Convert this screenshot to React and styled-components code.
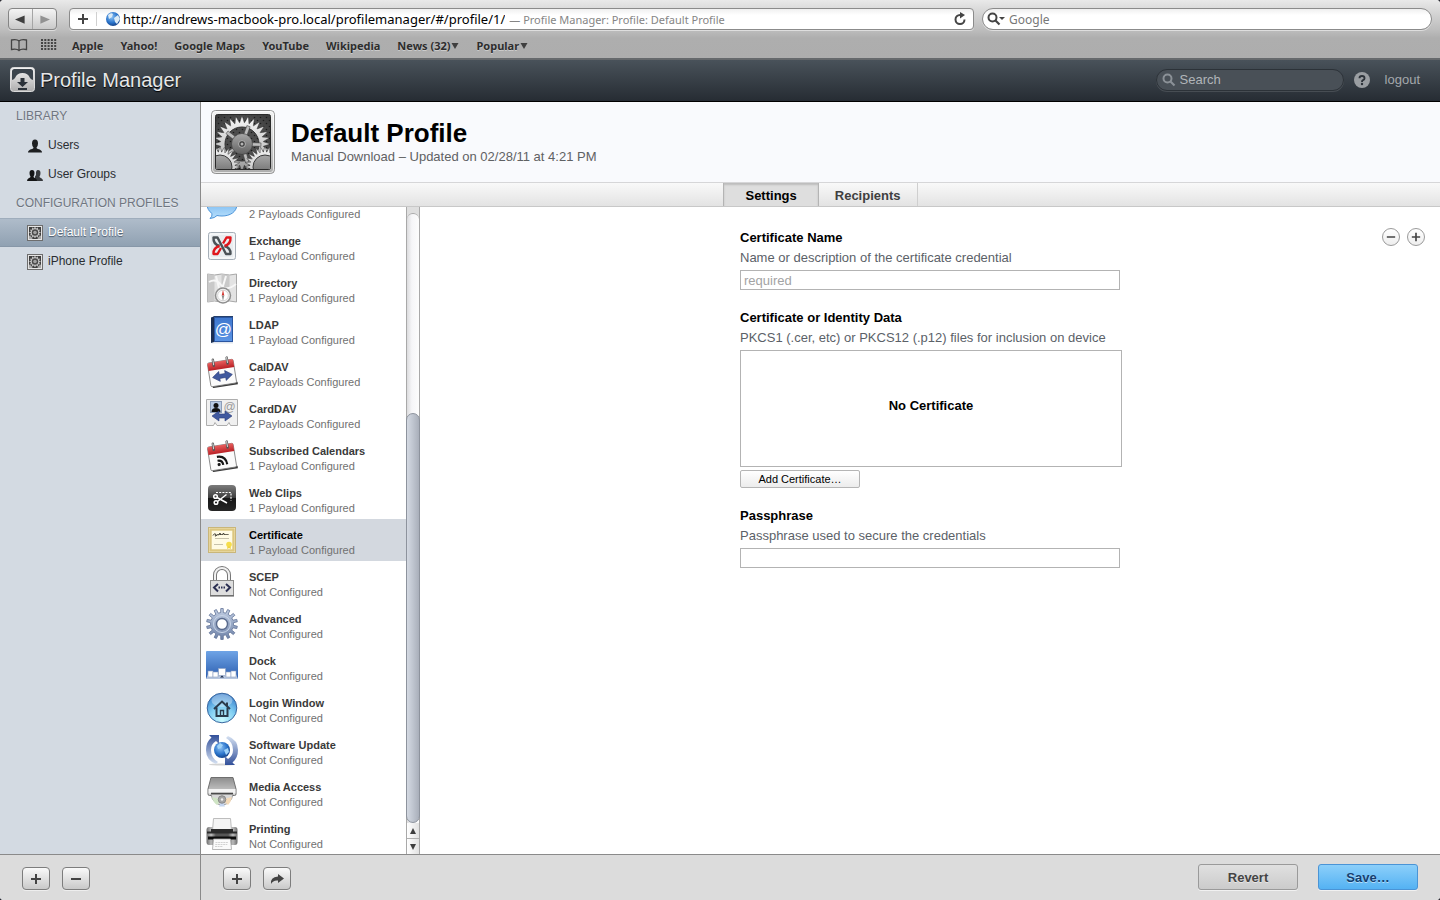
import React, { useState } from "react";
import styled, { createGlobalStyle, css } from "styled-components";

const helvetica = `"Liberation Sans", Helvetica, Arial, sans-serif`;
const lucida = `"Noto Sans", "Lucida Grande", sans-serif`;
const lineColor = "#8a8a8a";

const GlobalStyle = createGlobalStyle`
  * {
    box-sizing: border-box;
  }
  body {
    margin: 0;
    background: #2b2b33;
    font-family: ${helvetica};
    font-size: 13px;
  }
  button, input {
    font-family: inherit;
    font-size: inherit;
    margin: 0;
  }
  button {
    cursor: pointer;
  }
  svg {
    display: block;
    flex: none;
  }
`;

const Window = styled.div`
  display: flex;
  flex-direction: column;
  height: 100vh;
  border-radius: 4px;
  overflow: hidden;
  background: white;
`;

/* ---------- browser ---------- */

const BrowserChrome = styled.header`
  flex: none;
  font-family: ${lucida};
  background: linear-gradient(#e9e9e9 0, #d6d6d6 12px, #bdbdbd 30px, #aeaeae 38px, #adadad 100%);
  border-bottom: 2px solid #66696c;
`;

const Toolbar = styled.div`
  display: flex;
  padding: 8px 8px 0;
`;

const NavButtons = styled.div`
  display: flex;
  width: 49px;
  height: 22px;
  margin-right: 12px;
  border: 1px solid #858585;
  border-radius: 4px;
  background: linear-gradient(#f4f4f4, #c9c9c9);
  box-shadow: 0 1px rgba(255, 255, 255, 0.5);
`;

const NavButton = styled.button`
  flex: 1;
  display: flex;
  align-items: center;
  justify-content: center;
  padding: 0;
  border: none;
  background: none;

  & + & {
    border-left: 1px solid #a5a5a5;
  }
`;

const AddressBar = styled.div`
  flex: 1;
  display: flex;
  align-items: center;
  min-width: 0;
  height: 22px;
  margin-right: 8px;
  border: 1px solid #8b8b8b;
  border-radius: 4px;
  background: linear-gradient(#f0f0f0, white 6px);
  box-shadow: 0 1px rgba(255, 255, 255, 0.5);
`;

const AddressButton = styled.button`
  display: flex;
  align-items: center;
  justify-content: center;
  width: 27px;
  height: 14px;
  padding: 0;
  border: none;
  border-right: ${props => (props.$divided ? "1px solid #d0d0d0" : "none")};
  background: none;
`;

const UrlInput = styled.input`
  field-sizing: content;
  margin-left: 2px;
  padding: 0;
  border: none;
  outline: none;
  background: none;
  color: black;
`;

const PageTitle = styled.span`
  flex: 1;
  margin-left: 4px;
  font-size: 11px;
  color: #858585;
  white-space: nowrap;
  overflow: hidden;
`;

const GoogleBox = styled.label`
  flex: 0 1 450px;
  display: flex;
  align-items: center;
  height: 22px;
  padding: 0 4px;
  border: 1px solid #8b8b8b;
  border-radius: 11px;
  background: linear-gradient(#efefef, white 6px);
  box-shadow: 0 1px rgba(255, 255, 255, 0.5);
  font-size: 12px;
`;

const PlainInput = styled.input`
  flex: 1;
  min-width: 0;
  padding: 0 4px;
  border: none;
  outline: none;
  background: none;
  color: ${props => props.$color};

  &::placeholder {
    color: ${props => props.$color};
    opacity: 1;
  }
`;

const Bookmarks = styled.nav`
  display: flex;
  align-items: center;
  gap: 17px;
  height: 28px;
  padding: 2px 10px 0;
  font-size: 11px;
  font-weight: 700;
`;

const BookmarkIcons = styled.div`
  display: flex;
  gap: 13px;
  margin-right: -2px;
`;

const Bookmark = styled.a`
  display: flex;
  align-items: center;
  gap: 1px;
  color: #2d2d2d;
  text-decoration: none;
  white-space: nowrap;
  text-shadow: 0 1px rgba(255, 255, 255, 0.4);
`;

/* ---------- application bar ---------- */

const AppBar = styled.header`
  flex: none;
  display: flex;
  align-items: center;
  height: 42px;
  padding: 0 20px 2px 10px;
  background: linear-gradient(#49525a, #262c33);
  border-bottom: 1px solid black;
`;

const AppTitle = styled.h1`
  flex: 1;
  margin: 0 0 0 5px;
  font-size: 20px;
  font-weight: 400;
  line-height: 24px;
  color: #e6e7e8;
  text-shadow: 0 1px 1px black;
`;

const AppSearch = styled.label`
  display: flex;
  align-items: center;
  width: 188px;
  height: 22px;
  padding: 0 5px;
  border: 1px solid #2c3238;
  border-radius: 11px;
  background: #495057;
  box-shadow: 0 1px rgba(255, 255, 255, 0.12);
`;

const HelpButton = styled.button`
  display: flex;
  margin: 0 15px 0 10px;
  padding: 0;
  border: none;
  background: none;
`;

const Logout = styled.a`
  color: #a4a8ac;
  text-decoration: none;
`;

/* ---------- sidebar ---------- */

const Columns = styled.div`
  flex: 1;
  display: flex;
  min-height: 0;
`;

const Sidebar = styled.aside`
  flex: none;
  display: flex;
  flex-direction: column;
  width: 201px;
  border-right: 1px solid ${lineColor};
  background: #d3dae2;
`;

const SidebarBody = styled.nav`
  flex: 1;
  font-size: 12px;
  line-height: 29px;
`;

const SidebarHeading = styled.h2`
  margin: 0;
  padding-left: 16px;
  height: 29px;
  font-size: 12px;
  line-height: 28px;
  font-weight: 400;
  color: #6f7680;
  text-shadow: 0 1px rgba(255, 255, 255, 0.4);
`;

const SidebarItem = styled.a`
  display: flex;
  align-items: center;
  gap: 5px;
  height: 29px;
  padding-left: 27px;
  color: #2a2d31;
  text-decoration: none;

  ${props =>
    props.$selected &&
    css`
      color: white;
      background: linear-gradient(#b0bdcb, #8fa0b1);
      box-shadow: inset 0 1px #9fadbc, inset 0 -1px #8797a8;
      text-shadow: 0 1px 1px rgba(50, 65, 85, 0.8);
    `}
`;

/* ---------- profile ---------- */

const Main = styled.main`
  flex: 1;
  display: flex;
  flex-direction: column;
  min-width: 0;
`;

const ProfileHeader = styled.div`
  flex: none;
  display: flex;
  align-items: center;
  gap: 16px;
  height: 80px;
  padding: 0 10px;
  background: #f9fafd;
`;

const ProfileHeading = styled.div`
  padding-top: 2px;
`;

const ProfileTitle = styled.h2`
  margin: 0;
  font-size: 26px;
  line-height: 28px;
  color: black;
`;

const ProfileMeta = styled.p`
  margin: 0;
  line-height: 20px;
  color: #5f6163;
`;

const TabBar = styled.div`
  flex: none;
  display: flex;
  justify-content: center;
  height: 25px;
  border-top: 1px solid #d6d6d8;
  border-bottom: 1px solid #c8c8c8;
  background: linear-gradient(#f9f9f9, #e3e3e3);
`;

const Tab = styled.button`
  padding: 2px 16px 0;
  border: none;
  border-right: 1px solid #cfcfcf;
  background: none;
  font-weight: 700;
  color: #3f3f3f;

  ${props =>
    props.$selected &&
    css`
      padding: 2px 21px 0;
      border-left: 1px solid #b4b4b4;
      border-right-color: #b4b4b4;
      background: #dedede;
      box-shadow: inset 0 2px 2px rgba(0, 0, 0, 0.15);
      color: black;
    `}
`;

const Workspace = styled.div`
  flex: 1;
  display: flex;
  min-height: 0;
`;

const PayloadPane = styled.div`
  flex: none;
  display: flex;
  width: 219px;
  overflow: hidden;
`;

const PayloadList = styled.ul`
  flex: 1;
  margin: -24px 0 0;
  padding: 0;
  list-style: none;
`;

const PayloadRow = styled.li`
  display: flex;
  align-items: center;
  gap: 11px;
  height: 42px;
  padding-left: 5px;
  background: ${props => (props.$selected ? "#d3d8df" : "white")};
  cursor: pointer;
`;

const PayloadText = styled.div`
  padding-top: 6px;
  font-size: 11px;
  line-height: 15px;
  color: #717171;
`;

const PayloadName = styled.div`
  font-weight: 700;
  color: ${props => (props.$selected ? "black" : "#3a3a3a")};
`;

const ScrollBar = styled.div`
  display: flex;
  flex-direction: column;
  width: 14px;
  border-left: 1px solid #a9a9a9;
  border-right: 1px solid #a9a9a9;
  background: #dfdfdf;
`;

const ScrollTrack = styled.div`
  flex: 1;
  display: flex;
  flex-direction: column;
  margin-top: 6px;
  border-top: 1px solid #a9a9a9;
  border-radius: 6px 6px 0 0;
  background: linear-gradient(90deg, #dcdcde, #f6f6f8 40%, #fdfdfd);
`;

const ScrollSpace = styled.div`
  flex: 20;
`;

const ScrollThumb = styled.div`
  flex: 41;
  margin: 0 -1px;
  border: 1px solid #8d939d;
  border-radius: 7px;
  background: linear-gradient(90deg, #d4d9e2, #c3c9d3 40%, #a9afba);
`;

const ScrollButton = styled.button`
  flex: none;
  display: flex;
  align-items: center;
  justify-content: center;
  height: 15px;
  padding: 0;
  border: none;
  background: linear-gradient(90deg, white, #e2e2e2);

  & + & {
    height: 16px;
    border-top: 1px solid #b0b0b0;
  }
`;

const Detail = styled.section`
  flex: 1;
  display: grid;
  grid-template-columns: 1fr 380px 1fr;
  align-items: start;
  padding-top: 21px;
  background: white;
`;

const Form = styled.form`
  grid-column: 2;
  display: flex;
  flex-direction: column;
  gap: 18px;
  line-height: 20px;
`;

const FieldLabel = styled.label`
  display: block;
  font-weight: 700;
  color: black;
`;

const FieldHint = styled.p`
  margin: 0 0 2px;
  color: #5b6168;
  white-space: nowrap;
`;

const TextInput = styled.input`
  display: block;
  width: 100%;
  height: 20px;
  padding: 0 3px;
  border: 1px solid #b3b3b3;
  background: white;

  &::placeholder {
    color: #a3a3a3;
    opacity: 1;
  }
`;

const CertificateWell = styled.div`
  display: flex;
  align-items: center;
  justify-content: center;
  width: 382px;
  height: 117px;
  margin-bottom: 3px;
  padding-bottom: 5px;
  border: 1px solid #b3b3b3;
  font-weight: 700;
  color: black;
`;

const SmallButton = styled.button`
  display: block;
  width: 120px;
  height: 18px;
  padding: 0;
  border: 1px solid #b5b5b5;
  border-radius: 2px;
  background: linear-gradient(white, #ececec);
  font-size: 11px;
  color: black;
`;

const RoundButtons = styled.div`
  display: flex;
  justify-content: flex-end;
  gap: 7px;
  padding-right: 15px;
`;

const RoundButton = styled.button`
  display: flex;
  align-items: center;
  justify-content: center;
  width: 18px;
  height: 18px;
  padding: 0;
  border: 1px solid #9a9a9a;
  border-radius: 50%;
  background: linear-gradient(white, #eeeeee);
`;

/* ---------- bottom bars ---------- */

const BottomBar = styled.footer`
  flex: none;
  display: flex;
  align-items: center;
  gap: 12px;
  height: 46px;
  padding: 0 22px;
  border-top: 1px solid ${lineColor};
  background: #dcdcdc;
`;

const SquareButton = styled.button`
  display: flex;
  align-items: center;
  justify-content: center;
  width: 28px;
  height: 23px;
  margin-top: 2px;
  padding: 0;
  border: 1px solid #7d7d7d;
  border-radius: 4px;
  background: linear-gradient(#fafafa, #c9c9c9);
  box-shadow: 0 1px rgba(255, 255, 255, 0.5);
`;

const Spacer = styled.div`
  flex: 1;
`;

const ActionButton = styled.button`
  width: 100px;
  height: 26px;
  margin: 0 0 1px 8px;
  padding: 0;
  border: 1px solid ${props => (props.$primary ? "#4a94d6" : "#9a9a9a")};
  border-radius: 3px;
  background: ${props =>
    props.$primary
      ? "linear-gradient(#8ccffa, #54b2f3)"
      : "linear-gradient(#e0e0e0, #cbcbcb)"};
  box-shadow: 0 1px rgba(255, 255, 255, 0.6);
  color: ${props => (props.$primary ? "#153f70" : "#444")};
  font-weight: 700;
  text-shadow: 0 1px rgba(255, 255, 255, 0.5);
`;

/* ---------- icons ---------- */

const HiddenSvg = styled.svg`
  position: absolute;
`;

function gearPath(cx, cy, teeth, outer, inner, tip = 0.25, base = 0.6) {
  const step = (Math.PI * 2) / teeth;
  const at = (r, a) =>
    `${(cx + r * Math.cos(a)).toFixed(2)} ${(cy + r * Math.sin(a)).toFixed(2)}`;
  let d = "";
  for (let i = 0; i < teeth; i++) {
    const a = i * step - Math.PI / 2;
    d += `${i ? "L" : "M"}${at(inner, a - (step * base) / 2)}`;
    d += `L${at(outer, a - (step * tip) / 2)}`;
    d += `L${at(outer, a + (step * tip) / 2)}`;
    d += `L${at(inner, a + (step * base) / 2)}`;
  }
  return d + "Z";
}

const Gradients = () => (
  <HiddenSvg width="0" height="0" aria-hidden="true">
    <defs>
      <linearGradient id="frame" x2="0" y2="1">
        <stop offset="0" stopColor="#f4f4f4" />
        <stop offset="1" stopColor="#adadad" />
      </linearGradient>
      <linearGradient id="steel" x2="0" y2="1">
        <stop offset="0" stopColor="#f7f7f7" />
        <stop offset="0.55" stopColor="#cacaca" />
        <stop offset="1" stopColor="#959595" />
      </linearGradient>
      <linearGradient id="tray" x2="0" y2="1">
        <stop offset="0" stopColor="#8d8d8d" />
        <stop offset="1" stopColor="#d5d5d5" />
      </linearGradient>
      <linearGradient id="hub" x2="0" y2="1">
        <stop offset="0" stopColor="#a8a8a8" />
        <stop offset="1" stopColor="#606060" />
      </linearGradient>
      <linearGradient id="darkGlass" x2="0" y2="1">
        <stop offset="0" stopColor="#7c7c7c" />
        <stop offset="0.48" stopColor="#3f3f3f" />
        <stop offset="0.5" stopColor="#161616" />
        <stop offset="1" stopColor="#262626" />
      </linearGradient>
      <linearGradient id="blueFill" x2="0" y2="1">
        <stop offset="0" stopColor="#6fa4e6" />
        <stop offset="1" stopColor="#2a5cae" />
      </linearGradient>
      <linearGradient id="bookFill" x2="0" y2="1">
        <stop offset="0" stopColor="#3f78cf" />
        <stop offset="1" stopColor="#5c95e4" />
      </linearGradient>
      <linearGradient id="bubble" x2="0" y2="1">
        <stop offset="0" stopColor="#4f9fe8" />
        <stop offset="1" stopColor="#b9e0fc" />
      </linearGradient>
      <linearGradient id="gearBlue" x2="0" y2="1">
        <stop offset="0" stopColor="#c2cfe4" />
        <stop offset="1" stopColor="#7084a9" />
      </linearGradient>
      <linearGradient id="red" x2="0" y2="1">
        <stop offset="0" stopColor="#e9605f" />
        <stop offset="1" stopColor="#b81f24" />
      </linearGradient>
      <linearGradient id="arrowUp" x2="0" y2="1">
        <stop offset="0" stopColor="#32509a" />
        <stop offset="1" stopColor="#d5e1f2" />
      </linearGradient>
      <linearGradient id="arrowDown" x2="0" y2="1">
        <stop offset="0" stopColor="#d5e1f2" />
        <stop offset="1" stopColor="#32509a" />
      </linearGradient>
      <linearGradient id="printer">
        <stop offset="0" stopColor="#6e6e6e" />
        <stop offset="0.15" stopColor="#bcbcbc" />
        <stop offset="0.3" stopColor="#565656" />
        <stop offset="0.7" stopColor="#565656" />
        <stop offset="0.85" stopColor="#bcbcbc" />
        <stop offset="1" stopColor="#6e6e6e" />
      </linearGradient>
      <radialGradient id="aqua" cx="0.5" cy="0.9" r="0.9">
        <stop offset="0" stopColor="#c9fbff" />
        <stop offset="0.5" stopColor="#7fcdf2" />
        <stop offset="1" stopColor="#2f76c8" />
      </radialGradient>
      <radialGradient id="globe" cx="0.4" cy="0.35" r="0.7">
        <stop offset="0" stopColor="#8fc4f6" />
        <stop offset="0.6" stopColor="#2a74cb" />
        <stop offset="1" stopColor="#123c82" />
      </radialGradient>
      <radialGradient id="mesh" cx="0.5" cy="0.5" r="0.7">
        <stop offset="0" stopColor="#6a6a6a" />
        <stop offset="1" stopColor="#383838" />
      </radialGradient>
      <pattern id="holes" width="6" height="6" patternUnits="userSpaceOnUse">
        <circle cx="1.5" cy="1.5" r="0.8" fill="#1c1c1c" />
        <circle cx="4.5" cy="4.5" r="0.8" fill="#1c1c1c" />
      </pattern>
      <clipPath id="gearWindow">
        <rect x="5" y="5" width="54" height="54" rx="1" />
      </clipPath>
    </defs>
  </HiddenSvg>
);

const GearsIcon = () => (
  <svg width="64" height="64" viewBox="0 0 64 64">
    <rect x="0.5" y="0.5" width="63" height="63" rx="4" fill="url(#frame)" stroke="#909090" />
    <rect x="1.5" y="1.5" width="61" height="61" rx="3" fill="none" stroke="white" strokeOpacity="0.7" />
    <rect x="4.5" y="4.5" width="55" height="55" rx="2" fill="url(#mesh)" stroke="#2a2a2a" />
    <g clipPath="url(#gearWindow)">
      <rect x="5" y="5" width="54" height="54" fill="url(#holes)" />
      <path d={gearPath(31, 34, 28, 27.5, 21.5, 0.12, 0.95)} fill="url(#steel)" stroke="#2c2c2c" strokeWidth="0.5" />
      <circle cx="31" cy="34" r="17" fill="#4c4c4c" stroke="#333" />
      <circle cx="31" cy="34" r="17" fill="url(#holes)" />
      {[-70, 2, 74, 146, 218].map(angle => (
        <rect
          key={angle}
          x="38"
          y="32.3"
          width="12"
          height="3.4"
          fill="#bdbdbd"
          stroke="#3a3a3a"
          strokeWidth="0.5"
          transform={`rotate(${angle} 31 34)`}
        />
      ))}
      <circle cx="31" cy="34" r="10.5" fill="url(#hub)" stroke="#3a3a3a" strokeWidth="0.6" />
      <circle cx="31" cy="34" r="3.4" fill="#3d3d3d" stroke="#c9c9c9" strokeWidth="0.8" />
      <circle cx="31" cy="34" r="1.5" fill="#b5b5b5" />
      {[9, 54].map(cx => (
        <g key={cx}>
          <path d={gearPath(cx, 57, 28, 20, 15, 0.12, 0.95)} fill="url(#steel)" stroke="#2c2c2c" strokeWidth="0.5" />
          <circle cx={cx} cy="57" r="12" fill="url(#hub)" stroke="#3a3a3a" />
        </g>
      ))}
    </g>
  </svg>
);

const ProfileIcon = () => (
  <svg width="16" height="16" viewBox="0 0 16 16">
    <rect x="0.5" y="0.5" width="15" height="15" fill="#e4e4e4" stroke="#6d6d6d" />
    <rect x="2" y="2" width="12" height="12" fill="#3f3f3f" />
    <path d={gearPath(8, 7.5, 12, 5.5, 4.3, 0.3, 0.7)} fill="#c4c4c4" />
    <circle cx="8" cy="7.500" r="3.200" fill="#4a4a4a" />
    <circle cx="8" cy="7.500" r="1.800" fill="#a2a2a2" />
    <path d="M2 10.500q3 .5 3.500 3.500H2zM14 10.500q-3 .5-3.500 3.500H14z" fill="#a9a9a9" />
  </svg>
);

const PayloadSvg = ({ children }) => (
  <svg width="32" height="32" viewBox="0 0 32 32">
    {children}
  </svg>
);

const ArrowsShape = ({ y }) => (
  <path
    d={`M6 ${y}l7-5v3h6v-3l7 5-7 5v-3h-6v3z`}
    fill="#40599f"
    stroke="#2a3c78"
    strokeWidth="0.6"
  />
);

const Calendar = ({ children }) => (
  <PayloadSvg>
    <g transform="rotate(-9 16 17)">
      <path d="M4 28h26v2.500H5z" fill="#3b3b3b" />
      <rect x="3" y="5" width="26" height="24" rx="1.500" fill="#fbfbfb" stroke="#777" strokeWidth="0.8" />
      <path d="M3 13V6.500q0-1.500 1.500-1.500h23q1.500 0 1.500 1.500V13z" fill="url(#red)" />
      <path d="M9 2.500v6M23 2.500v6" stroke="#555" strokeWidth="2.400" strokeLinecap="round" />
      <path d="M9 2.500v5M23 2.500v5" stroke="#ddd" strokeWidth="1" strokeLinecap="round" />
      {children}
    </g>
  </PayloadSvg>
);

const icons = {
  chat: (
    <PayloadSvg>
      <path
        d="M16 2c9 0 15 6 15 14S24 28 16 28q-3 0-5-.5-2 2.500-7 3 2.500-2 2-5Q1 22 1 16C1 8 7 2 16 2z"
        fill="url(#bubble)"
        stroke="#4d94d8"
      />
    </PayloadSvg>
  ),
  exchange: (
    <PayloadSvg>
      <rect x="2.500" y="2.500" width="27" height="27" rx="2" fill="#e9edf0" stroke="#a6afb8" />
      <rect x="4" y="4" width="24" height="24" rx="1" fill="none" stroke="white" />
      <g fill="none" strokeWidth="2.400" strokeLinejoin="round">
        <path d="M13.500 16Q7 14 7.500 7.500h4L20 24h4.500q.5-6-6-8" stroke="#4b5257" />
        <path d="M18.500 16q6.500-2 6-8.500h-4l-3.500 6M15 18l-3.500 6h-4q-.5-6 6-8" stroke="#e0161c" />
      </g>
    </PayloadSvg>
  ),
  directory: (
    <PayloadSvg>
      <path d="M1.500 2l7 1 7-1 8 1 7-1v28l-7-1-8 1-7-1-7 1z" fill="#e3e3e3" stroke="#a8a8a8" />
      <path d="M8.500 3v26l-7 1V2zM23.500 3v26l-8 1V2z" fill="#c9c9c9" />
      <path d="M3 10q7-4 12 3t15-1M10 4l3 12M20 4l-3 10" stroke="#f7f7f7" strokeWidth="2" fill="none" />
      <circle cx="17" cy="23.500" r="7.500" fill="#f3f3f3" stroke="#8f8f8f" strokeWidth="1.500" />
      <circle cx="17" cy="23.500" r="5.300" fill="white" stroke="#bdbdbd" strokeWidth="0.600" />
      <path d="M17 18l1.300 5.500h-2.600z" fill="#d4342e" />
      <path d="M17 29l1.300-5.500h-2.600z" fill="#8d8d8d" />
    </PayloadSvg>
  ),
  ldap: (
    <PayloadSvg>
      <path d="M5 4l3-2h19v26l-3 1H5z" fill="#25406c" />
      <rect x="8.500" y="3.500" width="18" height="24" fill="url(#bookFill)" stroke="#2a55a0" />
      <path d="M5 3.500L8 3v25l-3 1z" fill="#1c2f52" />
      <path d="M5 29l3-1h19v1.500H6z" fill="#dfe5ee" />
      <text x="17.500" y="20.500" fontSize="17" textAnchor="middle" fill="white">@</text>
    </PayloadSvg>
  ),
  caldav: (
    <Calendar>
      <ArrowsShape y={20} />
    </Calendar>
  ),
  carddav: (
    <PayloadSvg>
      <path d="M0.500 1.500h31v26h-7l-1.500-3-2 3h-10l-2-3-1.500 3h-7z" fill="#f0f0f0" stroke="#adadad" />
      <rect x="4.500" y="3.500" width="11" height="11" fill="#b9cbe4" stroke="#8c9db8" />
      <circle cx="10" cy="7.500" r="2.500" fill="#111" />
      <path d="M5.500 14q0-4 4.500-4t4.500 4z" fill="#111" />
      <text x="23.500" y="13" fontSize="12" textAnchor="middle" fill="#9a9a9a">@</text>
      <ArrowsShape y={18} />
    </PayloadSvg>
  ),
  calendars: (
    <Calendar>
      <g fill="none" stroke="#161616" strokeWidth="2.200">
        <path d="M11 20q5 0 5 5M11 16q9 0 9 9" />
      </g>
      <circle cx="12" cy="24" r="1.600" fill="#161616" />
    </Calendar>
  ),
  clips: (
    <PayloadSvg>
      <rect x="2" y="3" width="28" height="26" rx="4" fill="url(#darkGlass)" />
      <path d="M10 10.500h15v8" fill="none" stroke="white" strokeWidth="1.200" strokeDasharray="2 1.200" />
      <g fill="none" stroke="white" strokeWidth="1.500">
        <circle cx="9.500" cy="14.500" r="1.800" />
        <circle cx="10" cy="20.500" r="1.800" />
        <path d="M11 15.500l10 5.500M11.500 19.500l9-7" />
      </g>
    </PayloadSvg>
  ),
  certificate: (
    <PayloadSvg>
      <rect x="2.500" y="3.500" width="27" height="25" fill="#fdf8dc" stroke="#c9b67a" />
      <rect x="4.500" y="5.500" width="23" height="21" fill="#fffbe4" stroke="#dcc67f" strokeWidth="2.400" />
      <path d="M7 11.500q1.500-3 3-1-2 3 1 .5 1-1 2 0l1-2 .5 2 1-1 1 1 1-2 1 2 1-1 1 1 1-1 1 1" stroke="#3a372c" fill="none" strokeWidth="1" />
      <path d="M9 14.500h14M8 20.500h9" stroke="#b9b49c" strokeWidth="0.800" />
      <circle cx="23" cy="20.500" r="2.800" fill="#f6dd4a" />
      <path d="M21.500 22.500l-.5 2.500 2-1 2 1-.5-2.500z" fill="#eed23e" />
    </PayloadSvg>
  ),
  scep: (
    <PayloadSvg>
      <path d="M9 16V9a7 7 0 0 1 14 0v7" fill="none" stroke="#777" strokeWidth="4" />
      <path d="M9 16V9a7 7 0 0 1 14 0v7" fill="none" stroke="#f1f1f1" strokeWidth="2" />
      <rect x="4.500" y="14.500" width="23" height="15" fill="#dedede" stroke="#8a8a8a" />
      <path d="M4 30h24" stroke="#555" />
      <path d="M12 18l-4 3.500 4 4M20 18l4 3.500-4 4" fill="none" stroke="#2b2f52" strokeWidth="2" />
      <path d="M12.500 21.500h7" stroke="#2b2f52" strokeWidth="2" strokeDasharray="1.500 1" />
    </PayloadSvg>
  ),
  advanced: (
    <PayloadSvg>
      <path d={gearPath(16, 16, 14, 15.5, 11.5, 0.35, 0.5)} fill="url(#gearBlue)" stroke="#5f7196" strokeWidth="0.800" />
      <circle cx="16" cy="16" r="8.500" fill="none" stroke="#c9d5e8" strokeWidth="1" />
      <circle cx="16" cy="16" r="5.500" fill="white" stroke="#5a6b8d" strokeWidth="1.400" />
    </PayloadSvg>
  ),
  dock: (
    <PayloadSvg>
      <rect x="0" y="1" width="32" height="28" rx="1" fill="url(#blueFill)" />
      <path d="M0 29l2-5h28l2 5z" fill="#b7c6df" />
      <g fill="white" stroke="#8ea0c2" strokeWidth="0.600">
        <rect x="2" y="21" width="5" height="6" />
        <rect x="7" y="22" width="5" height="5" />
        <rect x="20" y="22" width="5" height="5" />
        <rect x="25" y="21" width="5" height="6" />
        <rect x="12.500" y="18.500" width="7" height="7" />
      </g>
      <path d="M16 25.500l2 2h-4z" fill="#17294d" />
    </PayloadSvg>
  ),
  login: (
    <PayloadSvg>
      <circle cx="16" cy="16" r="14.800" fill="url(#aqua)" stroke="#3b68a0" />
      <ellipse cx="16" cy="8.500" rx="10.500" ry="6.500" fill="white" opacity="0.350" />
      <path d="M8 17l8-7.500 8 7.500M21 10.500V14" fill="none" stroke="#2a3b4c" strokeWidth="2" />
      <path d="M10.500 15.500V24h11v-8.500" fill="none" stroke="#2a3b4c" strokeWidth="2" />
      <path d="M14.500 24v-5.500h3V24" fill="none" stroke="#2a3b4c" strokeWidth="1.400" />
    </PayloadSvg>
  ),
  update: (
    <PayloadSvg>
      <ellipse cx="16" cy="30.500" rx="13" ry="1" fill="#d3d3d3" />
      <circle cx="16" cy="16" r="8" fill="url(#globe)" />
      <path d="M11 12l3-3 3 2-2 3-3 1zM18 16l4-2 1 4-3 3z" fill="#9fd2f8" />
      <path d="M10 30Q0 26 0 16 0 8 5.500 3.500L3 1h10v9l-3-3Q5 10 5 16q0 8 7 12z" fill="url(#arrowUp)" />
      <path d="M22 2q10 4 10 14 0 8-5.500 12.500L29 31H19v-9l3 3q5-3 5-9 0-8-7-12z" fill="url(#arrowDown)" />
    </PayloadSvg>
  ),
  media: (
    <PayloadSvg>
      <path d="M5 1.500h22L30 13v5q0 1.500-1.500 1.500h-25Q2 19.500 2 18v-5z" fill="url(#tray)" stroke="#6f6f6f" />
      <path d="M2.500 13h27v4.500h-27z" fill="#f3f3f3" />
      <path d="M5 17.500h22" stroke="#4a4a4a" strokeWidth="1.600" />
      <path d="M5 18.500a11.200 13 0 0 0 22 0z" fill="#d8d8d8" stroke="#8b8b8b" strokeWidth="0.800" />
      <path d="M16 23.500L6 21q1 5 5 8z" fill="#cfe4c4" />
      <path d="M16 23.500L26 21q-1 5-4 8z" fill="#f3d9b7" />
      <path d="M16 23.500l3 7h-6z" fill="#c4d5f0" />
      <circle cx="16" cy="23.500" r="3.800" fill="#a5a5a5" stroke="#7c7c7c" strokeWidth="0.800" />
      <circle cx="16" cy="23.500" r="1.200" fill="#ededed" />
    </PayloadSvg>
  ),
  printing: (
    <PayloadSvg>
      <path d="M3 9h26q2.500 0 2.500 3v12q0 3-2.500 3H3q-2.500 0-2.500-3V12q0-3 2.500-3z" fill="url(#printer)" />
      <path d="M7.500 0.500h17l1 12h-19z" fill="#f4f4f4" stroke="#bdbdbd" />
      <path d="M5 11h22v2.500H5zM1 13.500h30v2H1z" fill="#2b2b2b" />
      <path d="M2 18.500h28v3H2z" fill="#0c0c0c" />
      <path d="M7.500 21h17l1 10.500h-19z" fill="#fafafa" stroke="#a5a5a5" strokeWidth="0.800" />
      <path d="M9.500 24.500h13M9.300 26.500h12M9 28.500h8" stroke="#c8c8c8" strokeWidth="0.800" strokeDasharray="2 .6" />
    </PayloadSvg>
  )
};

const Triangle = ({ d, size = 8, color = "#3f3f3f" }) => (
  <svg width={size} height={size} viewBox="0 0 8 8">
    <path d={d} fill={color} />
  </svg>
);

const PlusMinus = ({ plus, size = 12, color = "#444" }) => (
  <svg width={size} height={size} viewBox="0 0 12 12">
    <path d={plus ? "M1 6h10M6 1v10" : "M1 6h10"} stroke={color} strokeWidth="2" />
  </svg>
);

const UserIcon = () => (
  <svg width="16" height="16" viewBox="0 0 16 16">
    <path
      d="M8 1.500q3 0 3 4 0 2.500-1.500 4 0 1 1.500 1.500 4 1 4 3.500H1q0-2.500 4-3.500 1.500-.5 1.500-1.500Q5 8 5 5.500q0-4 3-4z"
      fill="#1d1f21"
    />
  </svg>
);

const GroupIcon = () => (
  <svg width="16" height="16" viewBox="0 0 16 16">
    <path
      d="M11 3q2.500 0 2.500 3 0 2-1 3.500 0 1 1.500 1.500 2 .8 2 3H8V9.500L9 8q-.5-5 2-5z"
      fill="#36393c"
    />
    <path
      d="M5 3q2.500 0 2.500 3 0 2-1 3.500 0 1 1.500 1.500 2 .8 2 3H0q0-2.200 2-3 1.500-.5 1.500-1.500-1-1.500-1-3.500 0-3 2.500-3z"
      fill="#141516"
    />
  </svg>
);

const Magnifier = ({ color, menu }) => (
  <svg width={menu ? 18 : 14} height="14" viewBox={menu ? "0 0 18 14" : "0 0 14 14"}>
    <circle cx="5.500" cy="5.500" r="4" fill="none" stroke={color} strokeWidth="2" />
    <path d="M8.500 8.500l4 4" stroke={color} strokeWidth="2.200" />
    {menu && <path d="M12 5h6l-3 3z" fill={color} />}
  </svg>
);

const bookmarks = ["Apple", "Yahoo!", "Google Maps", "YouTube", "Wikipedia"];
const bookmarkFolders = ["News (32)", "Popular"];

const payloads = [
  { icon: "chat", name: "iChat", status: "2 Payloads Configured" },
  { icon: "exchange", name: "Exchange", status: "1 Payload Configured" },
  { icon: "directory", name: "Directory", status: "1 Payload Configured" },
  { icon: "ldap", name: "LDAP", status: "1 Payload Configured" },
  { icon: "caldav", name: "CalDAV", status: "2 Payloads Configured" },
  { icon: "carddav", name: "CardDAV", status: "2 Payloads Configured" },
  { icon: "calendars", name: "Subscribed Calendars", status: "1 Payload Configured" },
  { icon: "clips", name: "Web Clips", status: "1 Payload Configured" },
  { icon: "certificate", name: "Certificate", status: "1 Payload Configured" },
  { icon: "scep", name: "SCEP", status: "Not Configured" },
  { icon: "advanced", name: "Advanced", status: "Not Configured" },
  { icon: "dock", name: "Dock", status: "Not Configured" },
  { icon: "login", name: "Login Window", status: "Not Configured" },
  { icon: "update", name: "Software Update", status: "Not Configured" },
  { icon: "media", name: "Media Access", status: "Not Configured" },
  { icon: "printing", name: "Printing", status: "Not Configured" }
];

const Browser = () => (
  <BrowserChrome>
    <Toolbar>
      <NavButtons>
        <NavButton aria-label="Back">
          <Triangle d="M7 1v6L0 4z" size={11} />
        </NavButton>
        <NavButton aria-label="Forward">
          <Triangle d="M1 1v6l7-3z" size={11} color="#929292" />
        </NavButton>
      </NavButtons>
      <AddressBar>
        <AddressButton $divided aria-label="Add bookmark">
          <PlusMinus plus />
        </AddressButton>
        <svg width="24" height="16" viewBox="0 0 24 16">
          <circle cx="16" cy="8" r="7" fill="url(#globe)" />
          <path d="M11 4q3-3 5-1l-1 3-3 2zM17 7l4-3 2 4-3 5-2-2z" fill="#dcebf5" />
        </svg>
        <UrlInput
          aria-label="Address"
          defaultValue="http://andrews-macbook-pro.local/profilemanager/#/profile/1/"
        />
        <PageTitle>— Profile Manager: Profile: Default Profile</PageTitle>
        <AddressButton aria-label="Reload">
          <svg width="14" height="14" viewBox="0 0 14 14">
            <path d="M11.500 7.500a4.500 4.500 0 1 1-4.500-4.500h1" fill="none" stroke="#444" strokeWidth="2" />
            <path d="M7 0l5 3-5 3.500z" fill="#444" />
          </svg>
        </AddressButton>
      </AddressBar>
      <GoogleBox>
        <Magnifier color="#444" menu />
        <PlainInput aria-label="Google" placeholder="Google" $color="#777" />
      </GoogleBox>
    </Toolbar>
    <Bookmarks>
      <BookmarkIcons>
        <svg width="18" height="14" viewBox="0 0 18 14">
          <path
            d="M9 3Q7 1 1.500 2v9.500Q7 10.500 9 12.500q2-2 7.500-1V2Q11 1 9 3zM9 3v9"
            fill="none"
            stroke="#444"
            strokeWidth="1.300"
          />
        </svg>
        <svg width="16" height="14" viewBox="0 0 16 14">
          {[1, 4, 7, 10].map(y => (
            <path key={y} d={`M0 ${y + 1}h16`} stroke="#444" strokeWidth="2" strokeDasharray="2 1.300" />
          ))}
        </svg>
      </BookmarkIcons>
      {bookmarks.map(name => (
        <Bookmark key={name} href="#">
          {name}
        </Bookmark>
      ))}
      {bookmarkFolders.map(name => (
        <Bookmark key={name} href="#">
          {name}
          <Triangle d="M0.500 2h7L4 8z" />
        </Bookmark>
      ))}
    </Bookmarks>
  </BrowserChrome>
);

const TopBar = () => (
  <AppBar>
    <svg width="25" height="25" viewBox="0 0 25 25">
      <rect x="0.500" y="0.500" width="24" height="24" rx="3" fill="url(#frame)" stroke="#dadada" />
      <path d="M2 13V4.500Q2 2 4.500 2h16Q23 2 23 4.500V13q-2-.5-3-2-2-5-7.500-5T5 11q-1 1.500-3 2z" fill="#3b444c" />
      <path d="M10.500 11h4v4H18l-5.500 5L7 15h3.500z" fill="#2b3239" />
      <path d="M8 22h9" stroke="#2b3239" strokeWidth="2" />
    </svg>
    <AppTitle>Profile Manager</AppTitle>
    <AppSearch>
      <Magnifier color="#8b9197" />
      <PlainInput aria-label="Search" placeholder="Search" $color="#b1b5b9" />
    </AppSearch>
    <HelpButton aria-label="Help">
      <svg width="16" height="16" viewBox="0 0 16 16">
        <circle cx="8" cy="8" r="8" fill="#9a9ea2" />
        <path d="M5.500 6.300Q5.500 4 8 4t2.500 2.200Q10.500 7.500 9 8.200 8 8.700 8 10" fill="none" stroke="#2c3239" strokeWidth="1.900" />
        <circle cx="8" cy="12" r="1.200" fill="#2c3239" />
      </svg>
    </HelpButton>
    <Logout href="#">logout</Logout>
  </AppBar>
);

const CertificateForm = () => (
  <Form onSubmit={event => event.preventDefault()}>
    <div>
      <FieldLabel htmlFor="certificate-name">Certificate Name</FieldLabel>
      <FieldHint>Name or description of the certificate credential</FieldHint>
      <TextInput id="certificate-name" placeholder="required" />
    </div>
    <div>
      <FieldLabel htmlFor="add-certificate">Certificate or Identity Data</FieldLabel>
      <FieldHint>PKCS1 (.cer, etc) or PKCS12 (.p12) files for inclusion on device</FieldHint>
      <CertificateWell>No Certificate</CertificateWell>
      <SmallButton id="add-certificate" type="button">
        Add Certificate…
      </SmallButton>
    </div>
    <div>
      <FieldLabel htmlFor="passphrase">Passphrase</FieldLabel>
      <FieldHint>Passphrase used to secure the credentials</FieldHint>
      <TextInput id="passphrase" type="password" />
    </div>
  </Form>
);

export default function App() {
  const [tab, setTab] = useState("Settings");
  const [payload, setPayload] = useState("Certificate");
  const [profile, setProfile] = useState("Default Profile");

  return (
    <Window>
      <GlobalStyle />
      <Gradients />
      <Browser />
      <TopBar />
      <Columns>
        <Sidebar>
          <SidebarBody>
            <SidebarHeading>LIBRARY</SidebarHeading>
            <SidebarItem href="#">
              <UserIcon />
              Users
            </SidebarItem>
            <SidebarItem href="#">
              <GroupIcon />
              User Groups
            </SidebarItem>
            <SidebarHeading>CONFIGURATION PROFILES</SidebarHeading>
            {["Default Profile", "iPhone Profile"].map(name => (
              <SidebarItem
                key={name}
                href="#"
                $selected={profile === name}
                onClick={() => setProfile(name)}
              >
                <ProfileIcon />
                {name}
              </SidebarItem>
            ))}
          </SidebarBody>
          <BottomBar>
            <SquareButton aria-label="Add profile">
              <PlusMinus plus />
            </SquareButton>
            <SquareButton aria-label="Remove profile">
              <PlusMinus />
            </SquareButton>
          </BottomBar>
        </Sidebar>
        <Main>
          <ProfileHeader>
            <GearsIcon />
            <ProfileHeading>
              <ProfileTitle>Default Profile</ProfileTitle>
              <ProfileMeta>Manual Download – Updated on 02/28/11 at 4:21 PM</ProfileMeta>
            </ProfileHeading>
          </ProfileHeader>
          <TabBar>
            {["Settings", "Recipients"].map(name => (
              <Tab key={name} $selected={tab === name} onClick={() => setTab(name)}>
                {name}
              </Tab>
            ))}
          </TabBar>
          <Workspace>
            <PayloadPane>
              <PayloadList>
                {payloads.map(({ icon, name, status }) => (
                  <PayloadRow
                    key={name}
                    $selected={payload === name}
                    onClick={() => setPayload(name)}
                  >
                    {icons[icon]}
                    <PayloadText>
                      <PayloadName $selected={payload === name}>{name}</PayloadName>
                      {status}
                    </PayloadText>
                  </PayloadRow>
                ))}
              </PayloadList>
              <ScrollBar>
                <ScrollTrack>
                  <ScrollSpace />
                  <ScrollThumb />
                </ScrollTrack>
                <ScrollButton aria-label="Scroll up">
                  <Triangle d="M1 7h6L4 1z" />
                </ScrollButton>
                <ScrollButton aria-label="Scroll down">
                  <Triangle d="M1 1h6L4 7z" />
                </ScrollButton>
              </ScrollBar>
            </PayloadPane>
            <Detail>
              <CertificateForm />
              <RoundButtons>
                <RoundButton aria-label="Remove certificate">
                  <PlusMinus size={10} />
                </RoundButton>
                <RoundButton aria-label="Add certificate">
                  <PlusMinus plus size={10} />
                </RoundButton>
              </RoundButtons>
            </Detail>
          </Workspace>
          <BottomBar>
            <SquareButton aria-label="Add payload">
              <PlusMinus plus />
            </SquareButton>
            <SquareButton aria-label="Share">
              <svg width="14" height="12" viewBox="0 0 14 12">
                <path d="M8 1l6 4.500L8 10V7.500Q3 7 1 11 0 4 8 3.500z" fill="#444" />
              </svg>
            </SquareButton>
            <Spacer />
            <ActionButton>Revert</ActionButton>
            <ActionButton $primary>Save…</ActionButton>
          </BottomBar>
        </Main>
      </Columns>
    </Window>
  );
}
